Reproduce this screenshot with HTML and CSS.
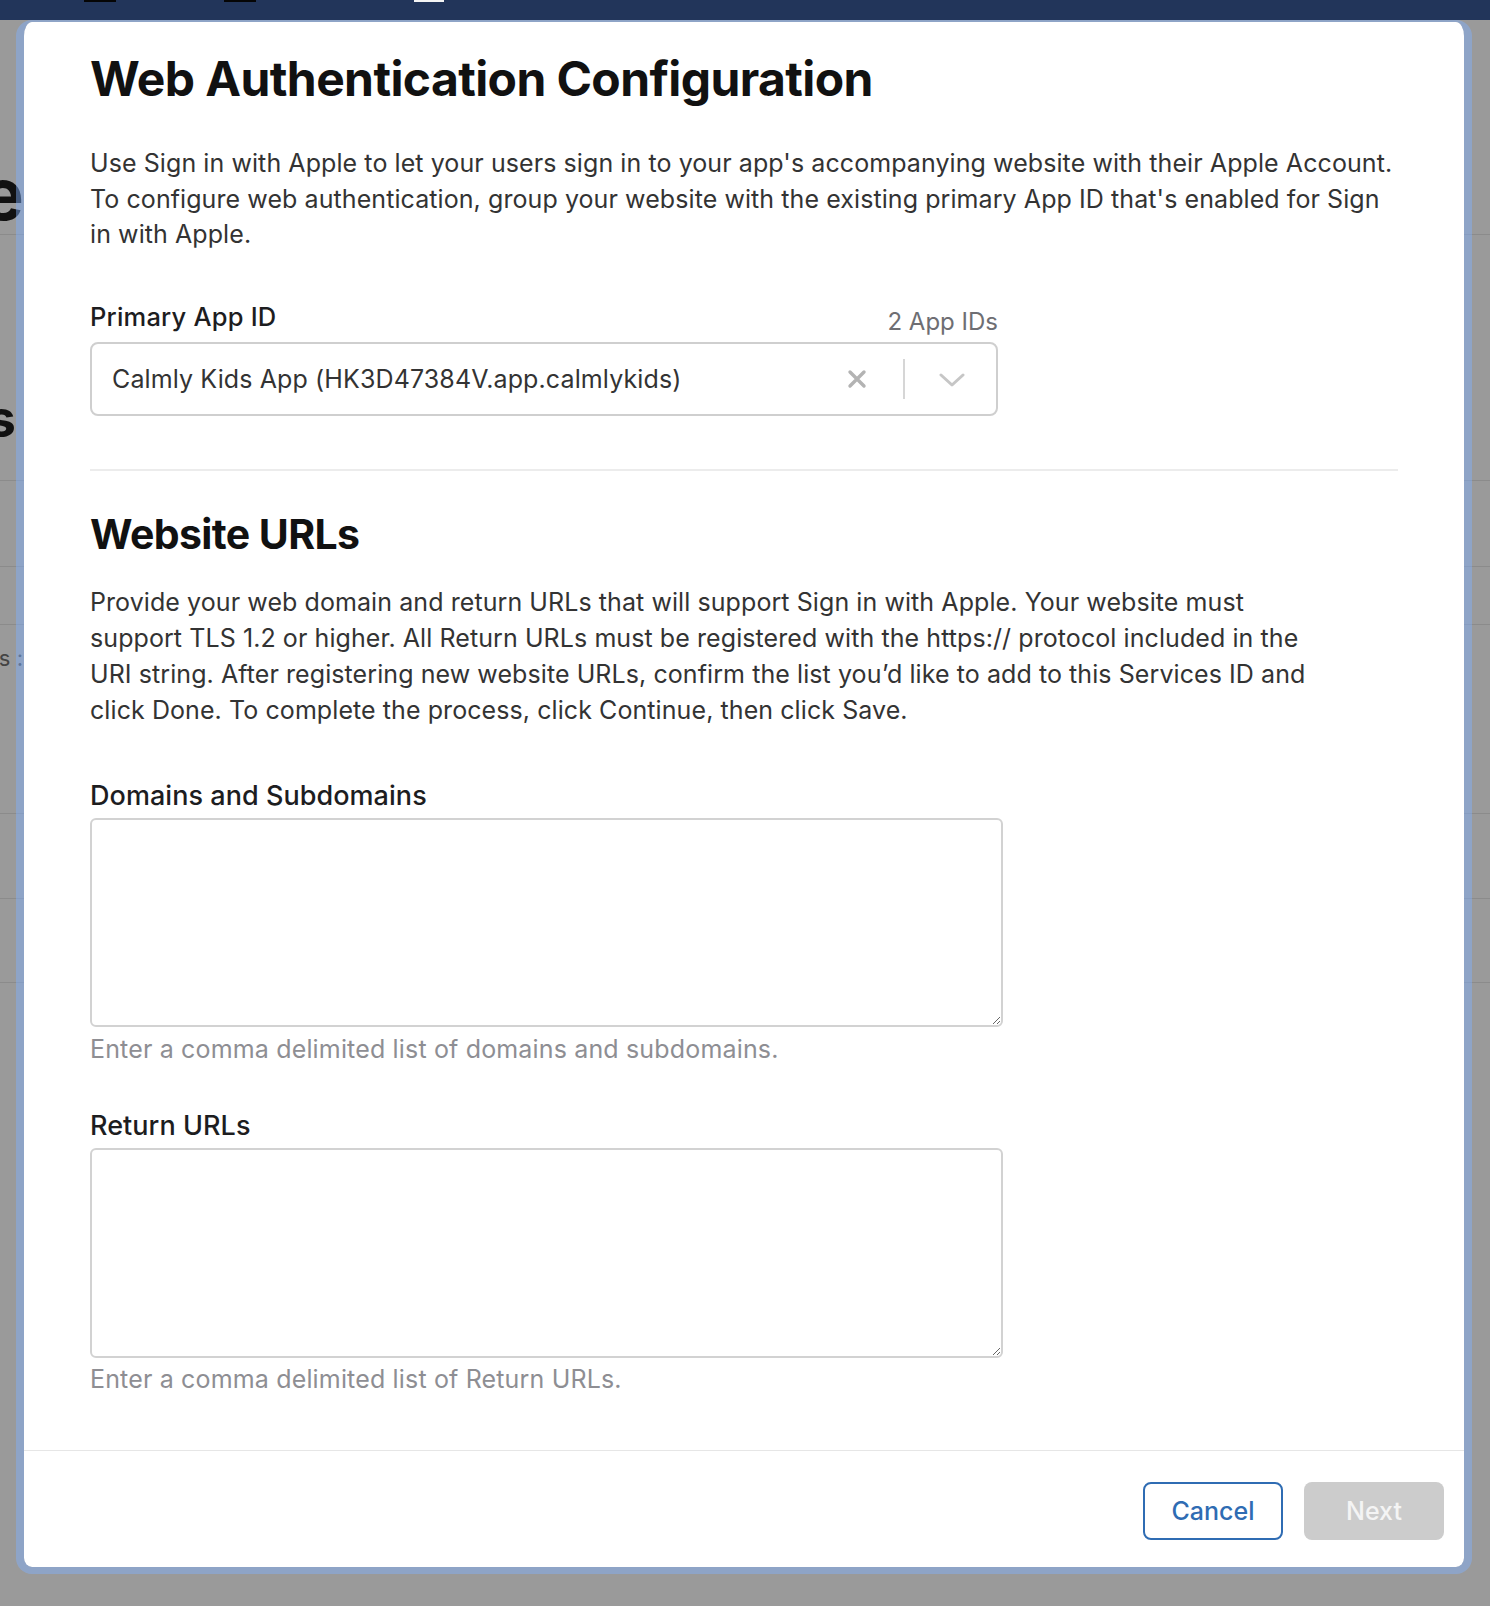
FILE: index.html
```html
<!DOCTYPE html>
<html lang="en">
<head>
    <meta charset="UTF-8">
    <meta name="viewport" content="width=device-width, initial-scale=1.0">
    <title>Web Authentication Configuration</title>
    <link rel="stylesheet" href="styles.css">
</head>
<body>
    <!-- dimmed page behind the dialog -->
    <div class="page">
        <div class="topbar">
            <span class="topbar-mark dark"></span>
            <span class="topbar-mark dark"></span>
            <span class="topbar-mark light"></span>
        </div>
        <div class="page-row row-title">
            <div class="row-edge"><span class="page-heading">Configure</span></div>
        </div>
        <div class="page-row row-section">
            <div class="row-edge"><span class="page-subheading">Services</span></div>
        </div>
        <div class="page-row row-a"></div>
        <div class="page-row row-b"></div>
        <div class="page-row row-c">
            <div class="row-edge"><span class="page-small">Sign in with Apple for Apps :</span></div>
        </div>
        <div class="page-row row-d"></div>
        <div class="page-row row-e"></div>
    </div>

    <div class="modal">
        <div class="modal-body">
            <h1 class="modal-title">Web Authentication Configuration</h1>
            <p class="modal-text intro">
                Use Sign in with Apple to let your users sign in to your app's accompanying website with their Apple Account.
                To configure web authentication, group your website with the existing primary App ID that's enabled for Sign
                in with Apple.
            </p>

            <div class="field-head">
                <label class="field-label">Primary App ID</label>
                <span class="field-count">2 App IDs</span>
            </div>
            <div class="select">
                <span class="select-value">Calmly Kids App (HK3D47384V.app.calmlykids)</span>
                <span class="select-clear">
                    <svg width="20" height="20" viewBox="0 0 20 20">
                        <path d="M3 3 L17 17 M17 3 L3 17" stroke="#b3b3b3" stroke-width="3.4" stroke-linecap="round" fill="none"/>
                    </svg>
                </span>
                <span class="select-sep"></span>
                <span class="select-arrow">
                    <svg width="26" height="14" viewBox="0 0 26 14">
                        <path d="M2 2 L13 12 L24 2" stroke="#c6c6c6" stroke-width="3" stroke-linecap="round" stroke-linejoin="round" fill="none"/>
                    </svg>
                </span>
            </div>

            <hr class="divider">

            <h2 class="section-title">Website URLs</h2>
            <p class="modal-text urls">
                Provide your web domain and return URLs that will support Sign in with Apple. Your website must
                support TLS 1.2 or higher. All Return URLs must be registered with the https:// protocol included in the
                URI string. After registering new website URLs, confirm the list you’d like to add to this Services ID and
                click Done. To complete the process, click Continue, then click Save.
            </p>

            <div class="field field-domains">
                <label class="field-label wide" for="domains">Domains and Subdomains</label>
                <textarea id="domains" class="field-input"></textarea>
                <div class="field-hint">Enter a comma delimited list of domains and subdomains.</div>
            </div>

            <div class="field field-returns">
                <label class="field-label wide" for="returns">Return URLs</label>
                <textarea id="returns" class="field-input tall"></textarea>
                <div class="field-hint tight">Enter a comma delimited list of Return URLs.</div>
            </div>
        </div>

        <div class="modal-footer">
            <button class="btn btn-outline">Cancel</button>
            <button class="btn btn-disabled" disabled>Next</button>
        </div>
    </div>
</body>
</html>
```

FILE: styles.css
```css
* {
    margin: 0;
    padding: 0;
    box-sizing: border-box;
}

body {
    font-family: 'Inter', 'Noto Sans', Arial, sans-serif;
    background: #9a9a9a;
    width: 1490px;
    height: 1606px;
    overflow: hidden;
    position: relative;
}

/* ---------- page behind the overlay ---------- */

.topbar {
    height: 20px;
    background: #22355a;
    display: flex;
    align-items: flex-start;
    padding-left: 84px;
}

.topbar-mark {
    width: 32px;
    height: 2px;
}

.topbar-mark.dark {
    background: #050505;
    margin-right: 108px;
}

.topbar-mark.light {
    width: 30px;
    margin-left: 50px;
    background: #f4f4f4;
}

.page-row {
    border-bottom: 1px solid #8b8b8b;
    display: flex;
    align-items: flex-end;
}

.row-title   { height: 215px; padding-bottom: 4px; }
.row-section { height: 246px; padding-bottom: 35px; }
.row-a       { height: 86px; }
.row-b       { height: 58px; }
.row-c       { height: 189px; align-items: flex-start; padding-top: 20px; }
.row-d       { height: 85px; }
.row-e       { height: 84px; }

.row-edge {
    width: 24px;
    overflow: hidden;
    display: flex;
    justify-content: flex-end;
    white-space: nowrap;
}

.page-heading {
    font-size: 72px;
    font-weight: 700;
    color: #111;
    line-height: 1;
}

.page-subheading {
    font-size: 52px;
    font-weight: 700;
    color: #111;
    line-height: 1;
    margin-right: 8px;
}

.page-small {
    font-size: 22px;
    color: #444;
    margin-right: 1px;
}

/* ---------- dialog ---------- */

.modal {
    position: absolute;
    left: 16px;
    top: 20px;
    width: 1456px;
    height: 1554px;
    background: #fff;
    background-clip: padding-box;
    border: 8px solid rgba(128, 178, 255, 0.45);
    border-top-width: 2px;
    border-bottom-width: 7px;
    border-radius: 16px;
    display: flex;
    flex-direction: column;
}

.modal-body {
    flex: 1;
    padding: 28px 66px 0;
}

.modal-title {
    font-size: 48px;
    font-weight: 700;
    line-height: 58px;
    color: #111;
    letter-spacing: -0.6px;
}

.modal-text {
    font-size: 25px;
    line-height: 35.7px;
    letter-spacing: 0.08px;
    color: #333;
}

.modal-text.intro {
    margin-top: 38px;
}

.modal-text.urls {
    margin-top: 26px;
    line-height: 36px;
    max-width: 1240px;
}

.field-head {
    display: flex;
    justify-content: space-between;
    align-items: flex-end;
    width: 908px;
    margin-top: 46px;
}

.field-label {
    display: block;
    font-size: 25.5px;
    font-weight: 500;
    line-height: 35px;
    letter-spacing: 0.2px;
    color: #1d1d1f;
}

.field-label.wide {
    font-size: 27px;
    letter-spacing: 0.05px;
}

.field-count {
    font-size: 24px;
    line-height: 30px;
    color: #6e6e73;
    margin-bottom: -3px;
}

.select {
    margin-top: 8px;
    width: 908px;
    height: 74px;
    border: 2px solid #cfcfcf;
    border-radius: 8px;
    display: flex;
    align-items: center;
    padding-left: 20px;
}

.select-value {
    flex: 1;
    font-size: 25px;
    letter-spacing: 0.12px;
    color: #333;
}

.select-clear {
    display: flex;
    margin-right: 36px;
}

.select-sep {
    width: 2px;
    height: 40px;
    background: #d6d6d6;
}

.select-arrow {
    display: flex;
    margin: 2px 31px 0 34px;
}

.divider {
    border: none;
    height: 2px;
    background: #ececec;
    margin-top: 53px;
}

.section-title {
    font-size: 41px;
    font-weight: 700;
    line-height: 48px;
    color: #111;
    margin-top: 39px;
    letter-spacing: -0.6px;
}

.field-domains {
    margin-top: 50px;
}

.field-returns {
    margin-top: 41px;
}

.field-input {
    display: block;
    margin-top: 5px;
    width: 913px;
    height: 209px;
    border: 2px solid #d2d2d2;
    border-radius: 6px;
    font-family: inherit;
    font-size: 25px;
    padding: 10px 20px;
    outline: none;
}

.field-input.tall {
    height: 210px;
}

.field-hint {
    margin-top: 5px;
    font-size: 25px;
    line-height: 35px;
    letter-spacing: 0.16px;
    color: #8e8e93;
}

.field-hint.tight {
    margin-top: 4px;
}

.modal-footer {
    border-top: 1px solid #e6e6e6;
    padding: 31px 20px 27px;
    display: flex;
    justify-content: flex-end;
    gap: 21px;
}

.btn {
    width: 140px;
    height: 58px;
    border-radius: 8px;
    font-family: inherit;
    font-size: 25px;
    font-weight: 500;
}

.btn-outline {
    background: #fff;
    border: 2px solid #2f6cb3;
    color: #2f6cb3;
}

.btn-disabled {
    background: #cccccc;
    border: none;
    color: #f4f4f4;
}
```
